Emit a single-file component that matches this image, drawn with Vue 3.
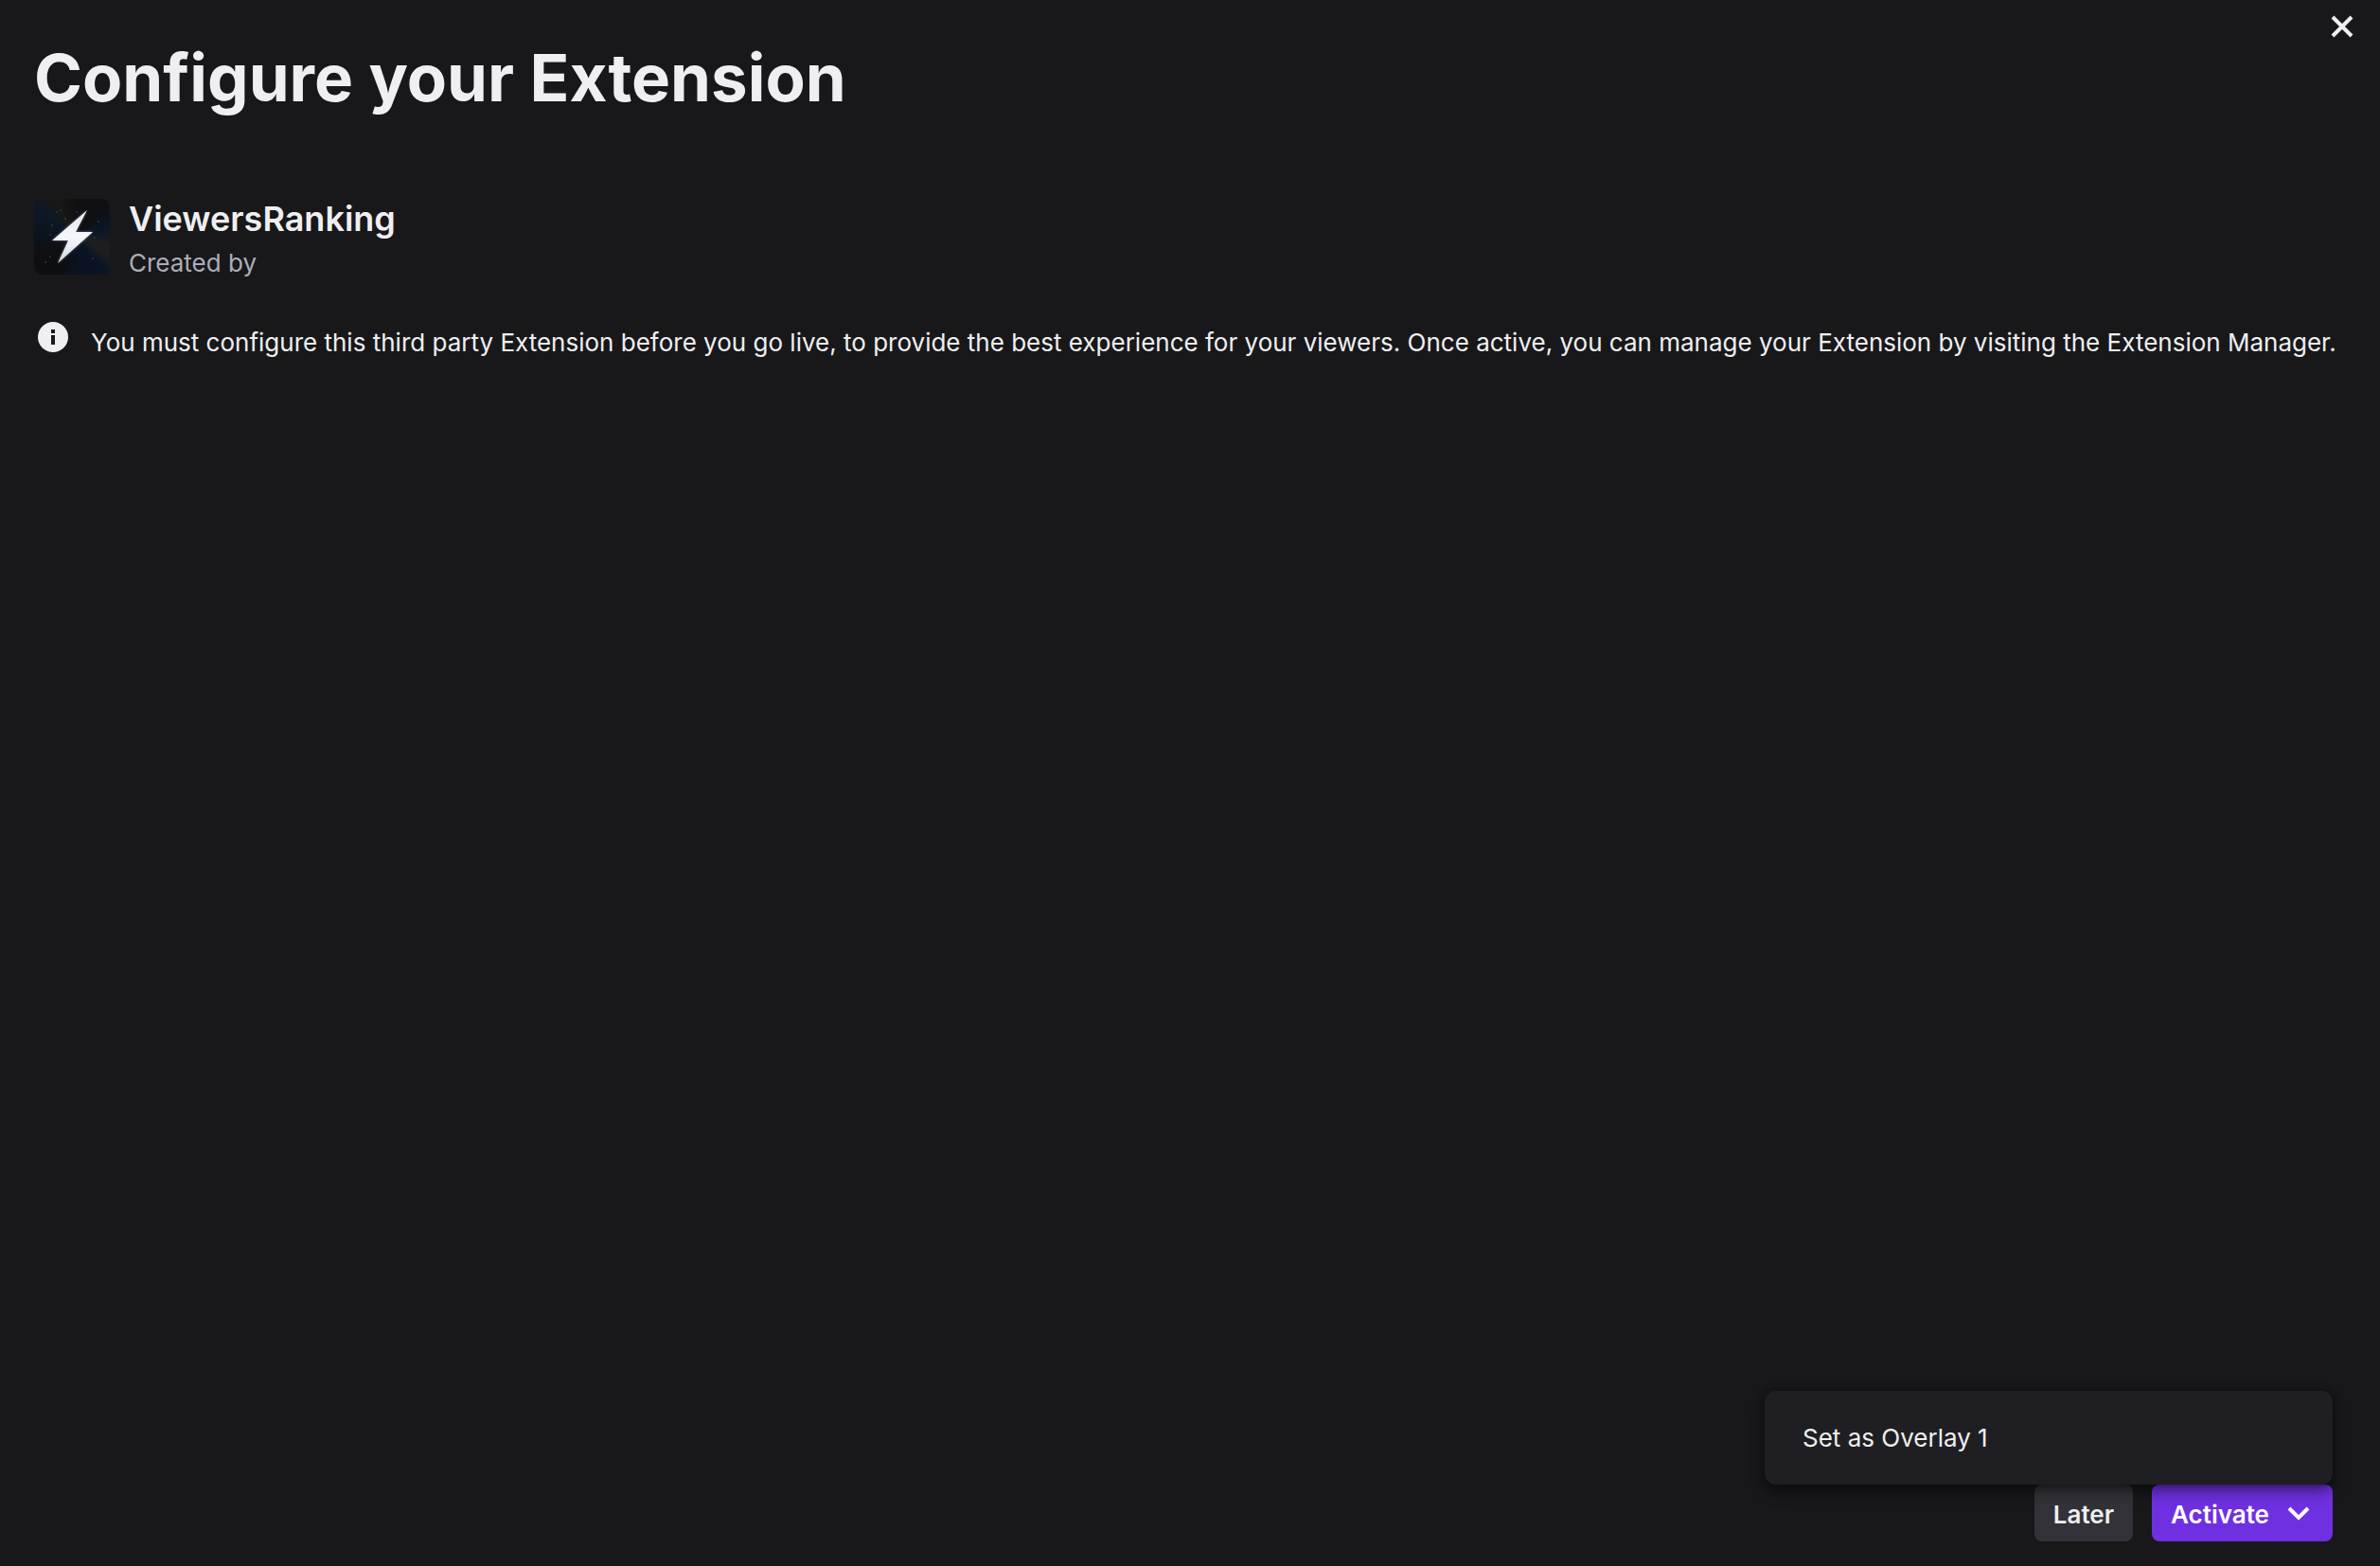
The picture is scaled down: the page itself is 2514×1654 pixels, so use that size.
<script setup>
import { ref } from 'vue'

const menuOpen = ref(true)
const placements = ['Set as Overlay 1']
const sparks = [
  [24, 14], [28, 12], [33, 21], [19, 28], [17, 38], [17, 61], [12, 67],
  [45, 14], [68, 24], [62, 63], [64, 41],
]
</script>

<template>
  <main class="dialog">
    <button class="close" type="button" aria-label="Close">
      <svg viewBox="0 0 24 24" width="24" height="24" aria-hidden="true">
        <path d="M2 2 22 22M22 2 2 22" />
      </svg>
    </button>

    <h1>Configure your Extension</h1>

    <section class="extension">
      <svg class="logo" viewBox="0 0 80 80" width="80" height="80" aria-hidden="true">
        <defs>
          <linearGradient id="bolt" x1="0" y1="0" x2="0" y2="1">
            <stop offset="0" stop-color="#e4e6ea" />
            <stop offset="0.5" stop-color="#f6f7fb" />
            <stop offset="1" stop-color="#d3d7de" />
          </linearGradient>
          <filter id="glow" x="-30%" y="-30%" width="160%" height="160%">
            <feGaussianBlur stdDeviation="1.500" />
          </filter>
        </defs>
        <circle v-for="([x, y], i) in sparks" :key="i" :cx="x" :cy="y" r="1" fill="#333940" />
        <path class="halo" d="M56 12 44 35H62L25 68 36 44H19Z" filter="url(#glow)" />
        <path d="M56 12 44 35H62L25 68 36 44H19Z" fill="url(#bolt)" />
      </svg>
      <div>
        <h2>ViewersRanking</h2>
        <p class="author">Created by</p>
      </div>
    </section>

    <section class="notice">
      <svg viewBox="0 0 32 32" width="32" height="32" aria-hidden="true">
        <circle cx="16" cy="16" r="16" fill="#efeff1" />
        <path d="M14 8h4v4h-4zM14 14h4v10h-4z" fill="#18181b" />
      </svg>
      <p>You must configure this third party Extension before you go live, to provide the best experience for your viewers. Once active, you can manage your Extension by visiting the Extension Manager.</p>
    </section>

    <footer class="actions">
      <button class="button later" type="button">Later</button>
      <div class="activate-wrap">
        <button class="button activate" type="button" aria-haspopup="menu" :aria-expanded="menuOpen" @click="menuOpen = !menuOpen">
          Activate
          <svg viewBox="0 0 24 16" width="24" height="16" aria-hidden="true">
            <path d="M2 2 12 12 22 2" />
          </svg>
        </button>
        <div v-if="menuOpen" class="menu" role="menu">
          <button v-for="item in placements" :key="item" type="button" role="menuitem">{{ item }}</button>
        </div>
      </div>
    </footer>
  </main>
</template>

<style>
body {
  background: #18181a;
}
</style>

<style scoped>
.dialog {
  box-sizing: border-box;
  position: relative;
  display: flex;
  flex-direction: column;
  min-height: 100vh;
  padding: 38px 40px 26px 36px;
  background: #18181a;
  color: #efeff1;
  font-family: Inter, "Liberation Sans", sans-serif;
  font-size: 26px;
  line-height: 39px;
}

h1,
h2,
p {
  margin: 0;
}

button {
  border: 0;
  font: inherit;
  color: inherit;
  cursor: pointer;
}

h1 {
  font-size: 69px;
  line-height: 88px;
  font-weight: 700;
}

h2 {
  font-size: 36px;
  line-height: 42px;
  font-weight: 600;
}

.close {
  position: absolute;
  top: 8px;
  right: 20px;
  display: flex;
  padding: 8px;
  background: none;
}

.close path {
  fill: none;
  stroke: #efeff1;
  stroke-width: 4;
}

.extension {
  display: flex;
  gap: 20px;
  margin-top: 84px;
}

.logo {
  flex: none;
  border-radius: 8px;
  background: conic-gradient(from 0deg at 55% 50%, #101011 0deg, #0e0f11 40deg, #0b1625 75deg, #1e1e20 105deg, #1e1e20 120deg, #0a1424 140deg, #0b1220 180deg, #0e0e0f 210deg, #0e0f11 240deg, #0c131d 270deg, #0c1726 305deg, #191817 330deg, #101011 360deg);
}

.halo {
  fill: #8fa9cc;
  opacity: 0.6;
}

.author {
  margin-top: 6px;
  color: #adadb8;
}

.notice {
  display: flex;
  gap: 24px;
  margin-top: 42px;
  padding-left: 4px;
}

.notice svg {
  flex: none;
  margin-top: 1px;
}

.notice p {
  margin-top: 3px;
}

.actions {
  display: flex;
  justify-content: flex-end;
  gap: 20px;
  margin-top: auto;
  padding-right: 10px;
}

.activate-wrap {
  position: relative;
}

.button {
  display: flex;
  align-items: center;
  height: 60px;
  padding: 2px 20px 0;
  border-radius: 8px;
  font-weight: 600;
}

.later {
  background: #323238;
}

.activate {
  gap: 19px;
  padding-right: 24px;
  background: #6f30e2;
  color: #fff;
}

.activate path {
  fill: none;
  stroke: #fff;
  stroke-width: 4;
}

.menu {
  position: absolute;
  right: 0;
  bottom: 100%;
  box-sizing: border-box;
  width: 600px;
  padding: 20px;
  border-radius: 12px;
  background: #1f1f23;
  box-shadow: 0 8px 16px rgba(0, 0, 0, 0.4), 0 0 8px rgba(0, 0, 0, 0.4);
}

.menu button {
  display: block;
  width: 100%;
  padding: 10px 20px;
  background: none;
  text-align: left;
}
</style>
